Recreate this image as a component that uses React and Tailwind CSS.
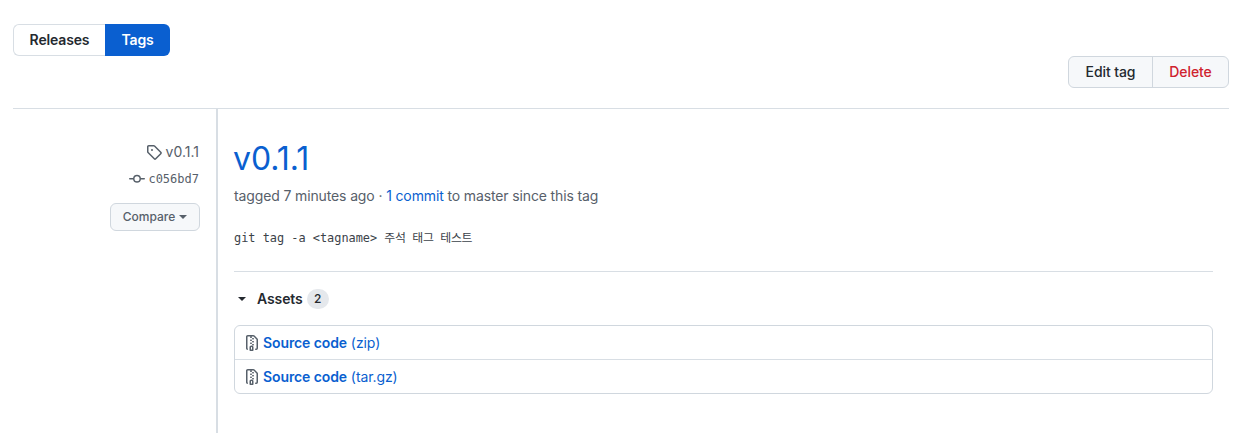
const Tag = () => (
  <svg width="16" height="16" viewBox="0 0 16 16" fill="#57606a" className="mr-1 shrink-0">
    <path d="M1 7.775V2.75C1 1.784 1.784 1 2.75 1h5.025c.464 0 .91.184 1.238.513l6.25 6.25a1.75 1.75 0 0 1 0 2.474l-5.026 5.026a1.75 1.75 0 0 1-2.474 0l-6.25-6.25A1.75 1.75 0 0 1 1 7.775Zm1.5 0c0 .066.026.13.073.177l6.25 6.25a.25.25 0 0 0 .354 0l5.025-5.025a.25.25 0 0 0 0-.354l-6.25-6.25a.25.25 0 0 0-.177-.073H2.75a.25.25 0 0 0-.25.25ZM6 5a1 1 0 1 1 0 2 1 1 0 0 1 0-2Z" />
  </svg>
);
const Commit = () => (
  <svg width="16" height="16" viewBox="0 0 16 16" fill="#57606a" className="mr-[3px] shrink-0">
    <path d="M11.93 8.5a4.002 4.002 0 0 1-7.86 0H.75a.75.75 0 0 1 0-1.5h3.32a4.002 4.002 0 0 1 7.86 0h3.32a.75.75 0 0 1 0 1.5Zm-1.43-.75a2.5 2.5 0 1 0-5 0 2.5 2.5 0 0 0 5 0Z" />
  </svg>
);
const Zip = () => (
  <svg width="16" height="16" viewBox="0 0 16 16" fill="#57606a" className="shrink-0">
    <path d="M3.5 1.75v11.5c0 .09.048.173.126.217a.75.75 0 0 1-.752 1.298A1.748 1.748 0 0 1 2 13.25V1.75C2 .784 2.784 0 3.75 0h5.586c.464 0 .909.185 1.237.513l2.914 2.914c.329.328.513.773.513 1.237v8.586A1.75 1.75 0 0 1 12.25 15h-.5a.75.75 0 0 1 0-1.5h.5a.25.25 0 0 0 .25-.25V4.664a.25.25 0 0 0-.073-.177L9.513 1.573a.25.25 0 0 0-.177-.073H7.25a.75.75 0 0 1 0 1.5h-.5a.75.75 0 0 1 0-1.5h-3a.25.25 0 0 0-.25.25Zm3.75 8.75h.5c.966 0 1.75.784 1.75 1.75v3a.75.75 0 0 1-.75.75h-2.5a.75.75 0 0 1-.75-.75v-3c0-.966.784-1.75 1.75-1.75ZM6 5.25a.75.75 0 0 1 .75-.75h.5a.75.75 0 0 1 0 1.5h-.5A.75.75 0 0 1 6 5.25Zm.75 2.25h.5a.75.75 0 0 1 0 1.5h-.5a.75.75 0 0 1 0-1.5ZM8 6.75A.75.75 0 0 1 8.75 6h.5a.75.75 0 0 1 0 1.5h-.5A.75.75 0 0 1 8 6.75ZM8.75 3h.5a.75.75 0 0 1 0 1.5h-.5a.75.75 0 0 1 0-1.5ZM8 9.75A.75.75 0 0 1 8.75 9h.5a.75.75 0 0 1 0 1.5h-.5A.75.75 0 0 1 8 9.75Zm-1 2.5v2.25h1v-2.25a.25.25 0 0 0-.25-.25h-.5a.25.25 0 0 0-.25.25Z" />
  </svg>
);
const Caret = ({ className }) => (
  <span className={"inline-block w-0 h-0 border-x-4 border-x-transparent border-t-4 " + className} />
);
const mono = "font-['DejaVu_Sans_Mono','Noto_Sans_CJK_KR',monospace]";

const Asset = ({ ext, top }) => (
  <div className={"flex items-center pl-[9px] " + (top ? "h-[34px] border-t border-[#d8dee4]" : "h-[33px]")}>
    <Zip />
    <a className="ml-[3px] text-sm tracking-[-0.1px] text-[#0a5fd0]">
      <span className="font-semibold">Source code</span> <span>({ext})</span>
    </a>
  </div>
);

export default function App() {
  return (
    <div className="h-[433px] w-[1260px] overflow-hidden bg-white pl-[13px] pr-[31px] font-['Inter',sans-serif] text-[#24292f]">
      <div className="pt-6 flex">
        <div className="flex h-8 text-sm font-semibold tracking-[-0.15px]">
          <a className="w-[92px] flex items-center justify-center border border-r-0 border-[#d8dee4] rounded-l-md">Releases</a>
          <a className="w-[65px] flex items-center justify-center bg-[#0a5fd0] text-white rounded-r-md">Tags</a>
        </div>
      </div>
      <div className="flex justify-end h-[53px] border-b border-[#d8dee4]">
        <div className="flex h-8 text-sm font-medium tracking-[-0.1px] bg-[#f6f8fa] border border-[#d0d7de] rounded-md">
          <a className="w-[84px] flex items-center justify-center border-r border-[#d0d7de]">Edit tag</a>
          <a className="w-[75px] flex items-center justify-center text-[#cf222e]">Delete</a>
        </div>
      </div>
      <div className="flex h-[325px]">
        <div className="w-[205px] shrink-0 border-r-2 border-[#d8dee4] pr-[16px] pt-[35px] flex flex-col items-end">
          <div className="flex items-center h-4 text-sm text-[#57606a]">
            <Tag />
            <span className="mr-px">v0.1.1</span>
          </div>
          <div className="flex items-center h-4 mt-[11px] text-[#57606a]">
            <Commit />
            <span className={mono + " mr-px text-xs"}>c056bd7</span>
          </div>
          <button className="mt-[16px] h-7 w-[90px] flex items-center justify-center gap-1 text-xs font-medium text-[#57606a] bg-[#f6f8fa] border border-[#d0d7de] rounded-md">
            Compare
            <Caret className="border-t-[#57606a]" />
          </button>
        </div>
        <div className="w-[979px] ml-[16px]">
          <h1 className="-ml-px mt-[28px] text-[32px] leading-[44px] text-[#0a5fd0]">v0.1.1</h1>
          <p className="mt-[1px] text-sm leading-[28px] tracking-[-0.13px] text-[#57606a]">
            tagged 7 minutes ago · <a className="text-[#0a5fd0]">1 commit</a> to master since this tag
          </p>
          <p className={mono + " mt-[18px] text-[11.9px] leading-5 text-[#3b4249]"}>git tag -a &lt;tagname&gt; <span className="tracking-[-0.35px]">주석 태그 테스트</span></p>
          <div className="mt-[23px] border-t border-[#d8dee4]" />
          <div className="mt-[15px] flex items-center h-6">
            <Caret className="ml-1 border-t-[#24292f]" />
            <span className="ml-[11px] text-sm font-semibold tracking-[-0.1px]">Assets</span>
            <span className="ml-[4px] w-[22px] h-[20px] rounded-full bg-[#e5e8ec] flex items-center justify-center text-xs font-medium">2</span>
          </div>
          <div className="mt-[14px] border border-[#d0d7de] rounded-md">
            <Asset ext="zip" />
            <Asset ext="tar.gz" top />
          </div>
        </div>
      </div>
    </div>
  );
}
